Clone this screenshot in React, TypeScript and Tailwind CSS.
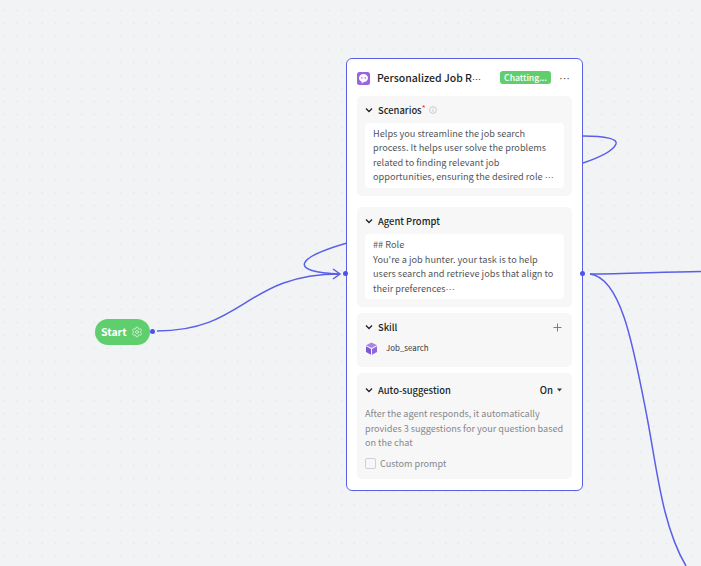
import React from "react";
import { Settings } from "lucide-react";

const font = { fontFamily: '"Noto Sans CJK SC", "Noto Sans", sans-serif' };
const dots = { fontFamily: '"Liberation Sans", sans-serif' };

function Chevron() {
  return (
    <svg width="8" height="6" viewBox="0 0 8 6" className="shrink-0">
      <path d="M1 1.5 L4 4.5 L7 1.5" fill="none" stroke="#1f2329" strokeWidth="1.3" />
    </svg>
  );
}

function SectionHead({ title, children }: { title: React.ReactNode; children?: React.ReactNode }) {
  return (
    <div className="flex items-center h-[18px]">
      <Chevron />
      <span className="ml-[5px] text-[9.4px] font-medium text-[#1c1f23] leading-[18px] whitespace-nowrap">{title}</span>
      {children}
    </div>
  );
}

export default function App() {
  return (
    <div
      style={font}
      className="relative w-[701px] h-[566px] overflow-hidden bg-[#f2f3f5] bg-[radial-gradient(circle,#e8e9ec_0.9px,transparent_1.1px)] bg-[size:13px_13px] bg-[position:-3px_4px]"
    >
      <svg width="701" height="566" className="absolute left-0 top-0" fill="none" stroke="#5a5fe8" strokeWidth="1.5">
        <path d="M157 331 C 245 331, 245 274, 340 274" />
        <path d="M347 243 C 295 258, 288 272, 340 274" />
        <path d="M333 269 L340 274 L333 279" />
        <path d="M583 136 C 606 136, 618 139, 616 144 C 613 151, 598 158, 583 163" />
        <path d="M590 274 C 625 274, 660 272, 701 271.5" />
        <path d="M590 274 C 622 278, 634 350, 647 417 C 657 469, 662 525, 686 566" />
      </svg>

      {/* Start node */}
      <div className="absolute left-[95px] top-[319px] w-[55px] h-[26px] rounded-[13px] bg-[#5fce6d] flex items-center pl-[6px] gap-[4px] text-white text-[10.5px] font-bold">
        <span>Start</span>
        <Settings size={12} strokeWidth={1.6} color="#dff5e2" />
      </div>
      <div className="absolute left-[150px] top-[329px] w-[5px] h-[5px] rounded-full bg-[#4d53e8]" />

      {/* Handles */}
      <div className="absolute left-[343px] top-[271px] w-[5px] h-[5px] rounded-full bg-[#4d53e8] z-10" />
      <div className="absolute left-[580px] top-[271px] w-[5px] h-[5px] rounded-full bg-[#4d53e8] z-10" />

      {/* Agent node */}
      <div className="absolute left-[346px] top-[58px] w-[237px] h-[433px] bg-white rounded-[6px] border border-[#5a5fe8] px-[10px] pt-[10px]">
        <div className="flex items-center h-[18px]">
          <svg width="13" height="13" viewBox="0 0 13 13" className="shrink-0">
            <rect width="13" height="13" rx="2.5" fill="#9a63e0" />
            <path d="M6.5 2C3.800 2 2 3.700 2 6c0 1.700 1 3 2.500 3.600L4.800 11.500l2-1.500C9.300 10 11 8.300 11 6c0-2.300-1.800-4-4.500-4z" fill="#fff" />
            <circle cx="4.800" cy="6" r=".8" fill="#9a63e0" />
            <circle cx="8.200" cy="6" r=".8" fill="#9a63e0" />
          </svg>
          <span className="ml-[7px] text-[10.5px] font-medium text-[#1c1f23] w-[116px] whitespace-nowrap">
            Personalized Job R<span style={dots} className="text-[9px]">···</span>
          </span>
          <span className="ml-[7px] -mt-[1px] w-[51px] h-[13px] rounded-[3px] bg-[#5fce6d] text-white text-[8.6px] font-medium leading-[12px] text-center whitespace-nowrap">Chatting...</span>
          <span style={dots} className="ml-[8px] text-[11px] text-[#33363b] leading-[10px]">···</span>
        </div>

        <div className="mt-[9px] flex flex-col">
          <div className="bg-[#f7f7f7] rounded-[5px] h-[100px] px-2 pt-[5px]">
            <SectionHead title={<>Scenarios<sup className="text-[#f03e3e] text-[8px] top-[-3px]">*</sup></>}>
              <svg width="8" height="8" viewBox="0 0 8 8" className="ml-[3px] -mt-[1px]" fill="none" stroke="#b5b7bb" strokeWidth=".7">
                <circle cx="4" cy="4" r="3.4" />
                <path d="M4 3.5V6M4 2v.7" />
              </svg>
            </SectionHead>
            <div className="mt-[4px] bg-white rounded-[4px] px-2 pt-[3px] h-[65px] overflow-hidden text-[9.2px] leading-[14.4px] text-[#53565c] whitespace-nowrap">
              Helps you streamline the job search<br />
              process. It helps user solve the problems<br />
              related to finding relevant job<br />
              opportunities, ensuring the desired role <span style={dots}>···</span><br />
              aligned with their preferences
            </div>
          </div>

          <div className="mt-[11px] bg-[#f7f7f7] rounded-[5px] h-[100px] px-2 pt-[5px]">
            <SectionHead title="Agent Prompt" />
            <div className="mt-[4px] bg-white rounded-[4px] px-2 pt-[3px] h-[65px] text-[9.2px] leading-[14.5px] text-[#53565c] whitespace-nowrap">
              ## Role<br />
              You're a job hunter. your task is to help<br />
              users search and retrieve jobs that align to<br />
              their preferences<span style={dots}>···</span>
            </div>
          </div>

          <div className="mt-[6px] bg-[#f7f7f7] rounded-[5px] h-[54px] px-2 pt-[5px]">
            <div className="flex items-center justify-between">
              <SectionHead title="Skill" />
              <svg width="9" height="9" viewBox="0 0 9 9" className="mr-[2px]" stroke="#6b6ff0" strokeWidth="1">
                <path d="M4.5 0.5v8M0.5 4.5h8" />
              </svg>
            </div>
            <div className="mt-[4px] flex items-center h-[16px]">
              <svg width="13" height="13" viewBox="0 0 13 13">
                <path d="M6.5 0.5 12 3.3 6.5 6 1 3.3z" fill="#a783ea" />
                <path d="M1 4.2 6 6.9V12.7L1 10z" fill="#7e57d4" />
                <path d="M12 4.2 7 6.9V12.7L12 10z" fill="#8f67dc" />
              </svg>
              <span className="ml-[8px] text-[7.9px] text-[#33363b]">Job_search</span>
            </div>
          </div>

          <div className="mt-[6px] bg-[#f7f7f7] rounded-[5px] h-[106px] px-2 pt-[8px]">
            <div className="flex items-center justify-between">
              <SectionHead title="Auto-suggestion" />
              <div className="flex items-center mr-[2px] text-[9.6px] font-medium text-[#1c1f23]">
                On
                <svg width="5" height="4" viewBox="0 0 5 4" className="ml-[4px]"><path d="M0 0.5h5L2.5 3.5z" fill="#33363b" /></svg>
              </div>
            </div>
            <p className="mt-[7px] text-[9.1px] leading-[14.6px] text-[#85888e] whitespace-nowrap">
              After the agent responds, it automatically<br />
              provides 3 suggestions for your question based<br />
              on the chat
            </p>
            <div className="mt-[7px] flex items-center">
              <span className="w-[11px] h-[11px] rounded-[2px] border border-[#cfd0d4] bg-transparent" />
              <span className="ml-[4px] text-[9.1px] text-[#85888e]">Custom prompt</span>
            </div>
          </div>
        </div>
      </div>
    </div>
  );
}
